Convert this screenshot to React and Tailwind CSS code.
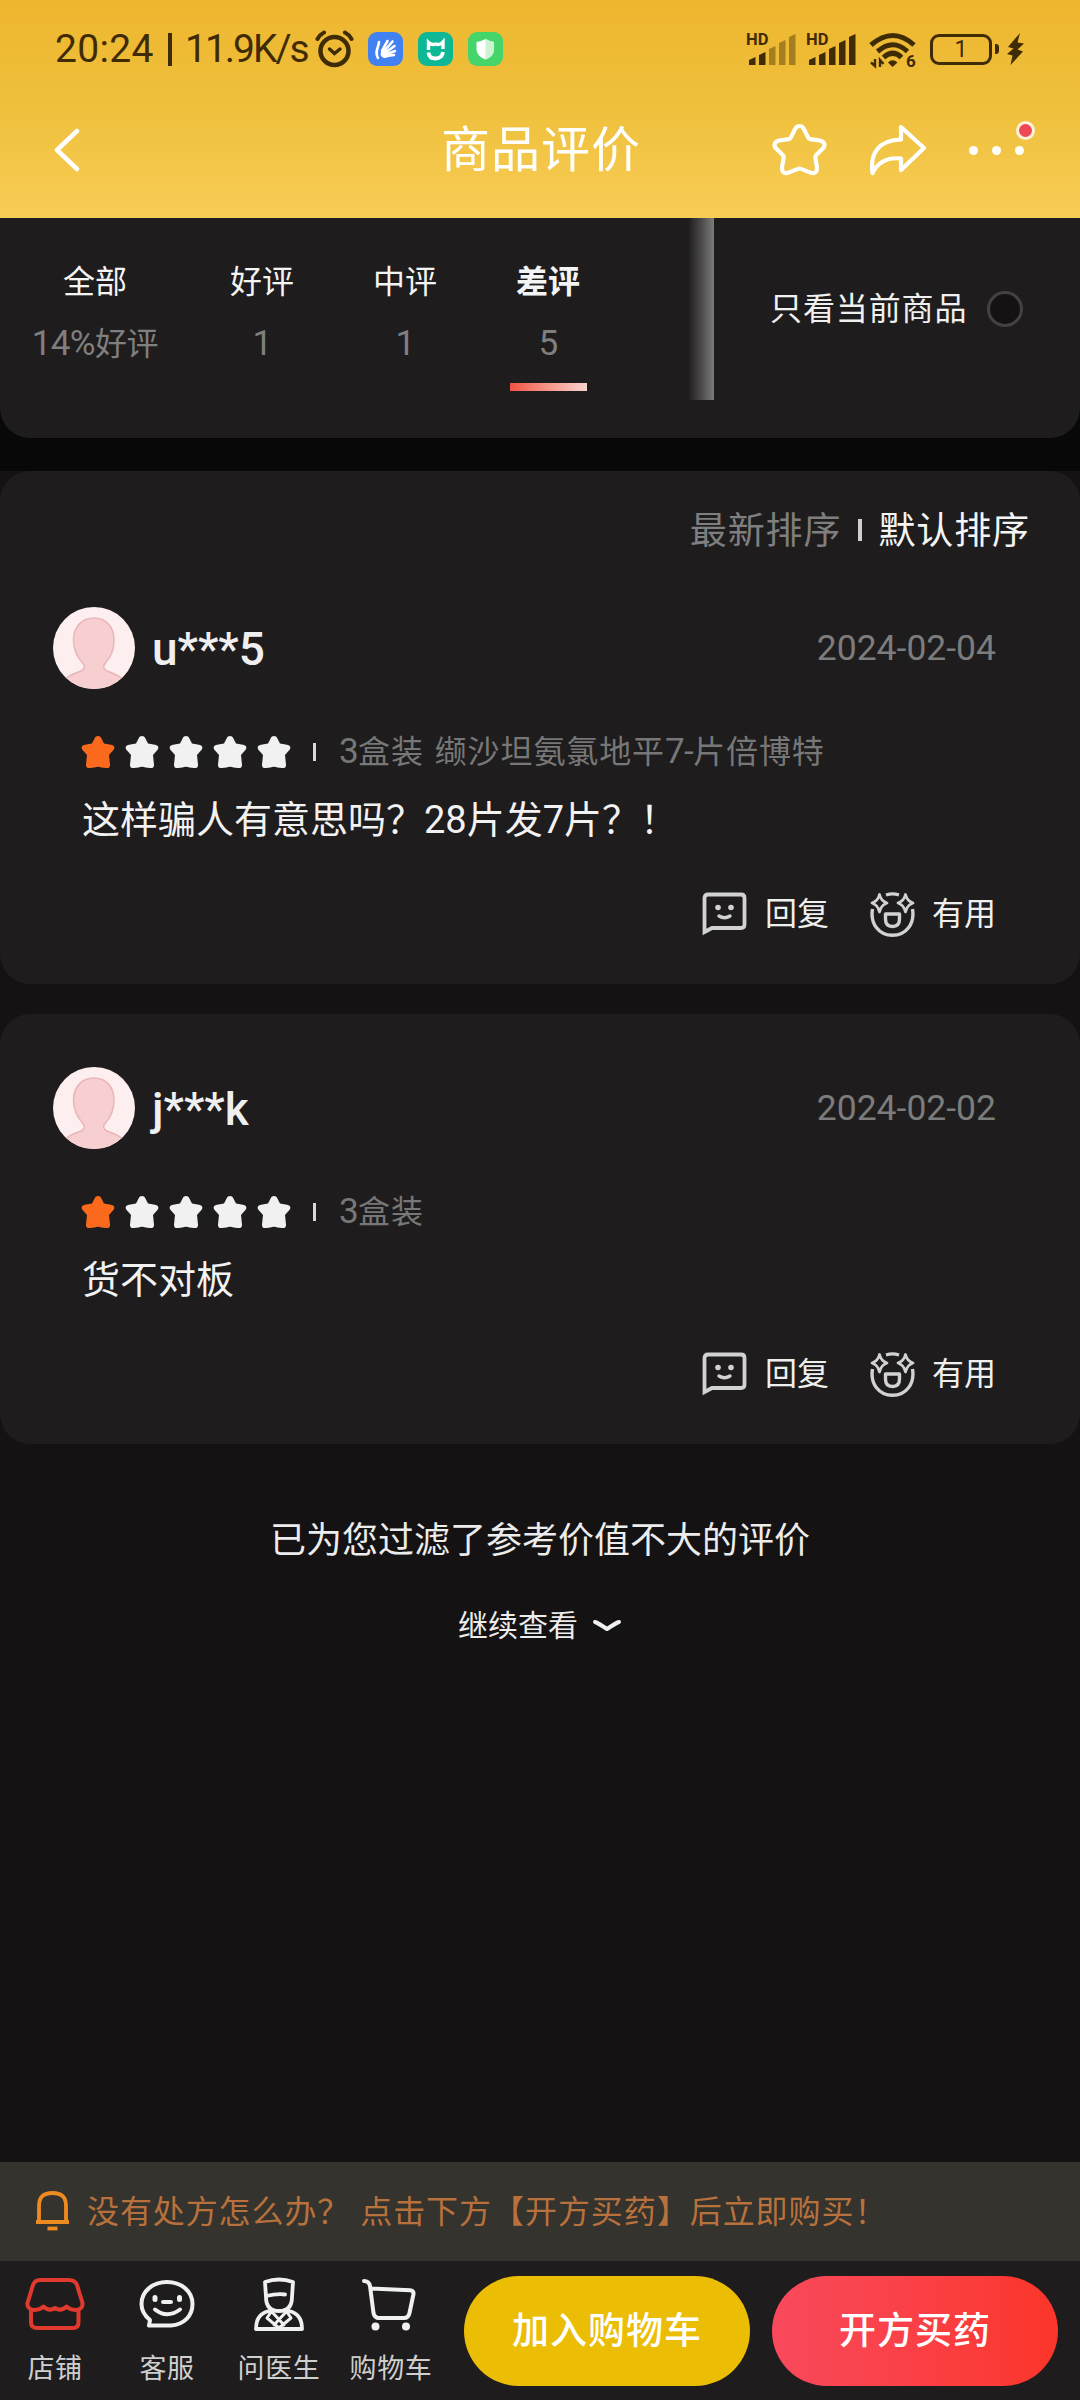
const STAR =
  "M27.5 3 C29.6 3 31 4.2 32 6.2 L36 14.4 C36.5 15.4 37.2 15.9 38.3 16.1 L47.6 17.5 C52.4 18.3 54 22.3 50.8 25.6 L44.3 32 C43.5 32.8 43.2 33.7 43.4 34.8 L44.9 43.8 C45.6 49 42.4 51.6 37.9 49.4 L29.6 46.1 C28.2 45.5 26.8 45.5 25.4 46.1 L17.1 49.4 C12.6 51.6 9.4 49 10.1 43.8 L11.6 34.8 C11.8 33.7 11.5 32.8 10.7 32 L4.2 25.6 C1 22.3 2.6 18.3 7.4 17.5 L16.7 16.1 C17.8 15.9 18.5 15.4 19 14.4 L23 6.2 C24 4.2 25.4 3 27.5 3 Z";

const RATING_STAR =
  "M17 1 C18.6 1 19.6 1.8 20.3 3.2 L23 8.6 L30 9.8 C33.4 10.4 34.4 12.8 32.2 15.2 L28 20 L29 29.5 C29.2 32.4 27.8 33.4 25 33 L20.5 32.6 Q17 30.8 13.500 32.6 L9 33 C6.2 33.400 4.800 32.400 5 29.500 L6 20 L1.800 15.200 C-0.400 12.800 0.600 10.400 4 9.800 L11 8.600 L13.700 3.200 C14.400 1.800 15.400 1 17 1 Z";

// Digits are set slightly larger than the Han characters around them.
function Mixed({ children }) {
  return children.split(/([\d%-]+)/).map((part, i) =>
    i % 2 ? (
      <span key={i} className="text-[1.1em] leading-none tracking-[-0.02em]">{part}</span>
    ) : (
      part
    )
  );
}

function Signal({ weak }) {
  const heights = [8, 13, 19, 25, 31];
  return (
    <svg width="50" height="34" viewBox="0 0 50 34" fill="#3f2c05" className="overflow-visible">
      <text x="-1" y="13" fontFamily="Roboto" fontWeight="700" fontSize="16.5">HD</text>
      {heights.map((h, i) => (
        <path
          key={h}
          d={`M${2 + i * 10} ${33 - h + 3} L${8.5 + i * 10} ${33 - h} V33 H${2 + i * 10} Z`}
          opacity={weak && i > 1 ? 0.42 : 1}
        />
      ))}
    </svg>
  );
}

function StatusBar() {
  return (
    <div className="flex h-[98px] items-center pl-[55px] text-[#3f2c05]">
      <div className="w-[98px] whitespace-nowrap text-[39px] leading-[46px] tracking-[0.3px]">20:24</div>
      <div className="ml-[15px] h-[33px] w-[4px] bg-[#3f2c05]" />
      <div className="ml-[13px] w-[124px] whitespace-nowrap text-[39px] leading-[46px] tracking-[-2px]">11.9K/s</div>
      <svg className="ml-[6px]" width="39" height="38" viewBox="0 0 39 38" fill="none" stroke="#3f2c05" strokeLinecap="round">
        <circle cx="19.500" cy="21" r="14" strokeWidth="4.500" />
        <path d="M2.500 9 Q5 4.500 9 2.500 M36.500 9 Q34 4.500 30 2.500" strokeWidth="4" />
        <path d="M14.500 19 L19.500 23.500 L25 19" strokeWidth="3.500" />
      </svg>
      <svg className="ml-[14px]" width="35" height="34" viewBox="0 0 35 34">
        <rect width="35" height="34" rx="9" fill="#4281f2" />
        <g stroke="#fff" strokeWidth="2.600" strokeLinecap="round" fill="none">
          <path d="M10 26 C6.500 20 10 17 11 10" />
          <path d="M14 19 L19.500 9 M15.500 20 L24.500 9.500 M17 21 L26.500 14 M18 22.500 L27 19 M18.500 24 L26 23" />
        </g>
        <path d="M14 17 L20 19 L20 25 C17 27 13 26 12.500 22 Z" fill="#fff" />
      </svg>
      <svg className="ml-[15px]" width="35" height="34" viewBox="0 0 35 34" fill="none" stroke="#fff">
        <rect width="35" height="34" rx="9" fill="#0eb795" stroke="none" />
        <path d="M10.500 18 V10.500 Q13.500 13.500 17.500 12 Q22 13.500 25 10 V17" strokeWidth="3.400" />
        <path d="M10.500 20.500 Q11 26.500 17.500 26.500 Q24 26.500 25 20" strokeWidth="3.800" />
      </svg>
      <svg className="ml-[15px]" width="35" height="34" viewBox="0 0 35 34">
        <rect width="35" height="34" rx="9" fill="#45d56b" />
        <path d="M17.500 7 Q22 9.500 26 10 V18 Q25.500 24.500 17.500 27.500 Q9.500 24.500 8.500 18 V10 Q13 9.500 17.500 7Z" fill="#fff" />
        <path d="M17.500 7 Q22 9.500 26 10 V18 Q25.500 24.500 17.500 27.500Z" fill="#cdf3d3" />
      </svg>
      <div className="ml-[244px] flex items-center gap-[10px]">
        <Signal weak />
        <Signal />
      </div>
      <svg className="ml-[12px] mt-[3px] overflow-visible" width="48" height="36" viewBox="0 0 48 36" fill="none" stroke="#3f2c05">
        <path d="M2 12 Q24 -7 45 12" strokeWidth="5" />
        <path d="M8.500 18.500 Q24 5 38.500 18.500" strokeWidth="5" />
        <path d="M14.500 24.500 Q24 16 32.500 24.500" strokeWidth="5" />
        <path d="M19 29.500 Q23.500 25 28.500 29.500 L23.500 34Z" fill="#3f2c05" stroke="none" />
        <path d="M6 26 V33 L2 29.500 M11 34 V27 L14.500 31" strokeWidth="2.400" />
        <text x="37" y="34" fontFamily="Roboto" fontWeight="700" fontSize="17" fill="#3f2c05" stroke="none">6</text>
      </svg>
      <div className="ml-[13px] flex h-[31px] w-[62px] items-center justify-center rounded-[9px] border-[3px] border-[#3f2c05] pt-[2px] text-[23px] leading-[24px]">1</div>
      <div className="ml-[3px] h-[10px] w-[4px] rounded-r-[3px] bg-[#3f2c05]" />
      <svg className="ml-[8px]" width="17" height="32" viewBox="0 0 17 32" fill="#3f2c05">
        <path d="M13 0 L1 14 L6.500 15.500 L0 21 L5.500 22.500 L3.500 32 L16 18.500 L10.500 16.500 L17 10.500 L10.500 9.500 Z" />
      </svg>
    </div>
  );
}

function TitleBar() {
  return (
    <div className="flex h-[104px] items-center pl-[54px]">
      <svg width="26" height="44" viewBox="0 0 26 44" fill="none" stroke="#fff" strokeWidth="4.500" strokeLinecap="round" strokeLinejoin="round">
        <path d="M23 3 L3 22 L23 41" />
      </svg>
      <h1 className="ml-[361px] mt-[1px] w-[200px] whitespace-nowrap text-[49px] leading-[60px] tracking-[1px] text-white">商品评价</h1>
      <svg className="mb-[2px] ml-[131px]" width="55" height="53" viewBox="0 0 55 53" fill="none" stroke="#fff" strokeWidth="4.200">
        <path d={STAR} />
      </svg>
      <svg className="mb-[2px] ml-[42px]" width="58" height="53" viewBox="0 0 58 53" fill="none" stroke="#fff" strokeWidth="4.200" strokeLinejoin="round">
        <path d="M32 4 L55 25 L32 47 V35.500 C18 34 9 39 3.500 50 C1 31 9 17 32 16.500 Z" />
      </svg>
      <div className="relative ml-[42px] flex gap-[14px]">
        <span className="size-[9px] rounded-full bg-white" />
        <span className="size-[9px] rounded-full bg-white" />
        <span className="size-[9px] rounded-full bg-white" />
        <span className="absolute -top-[25px] left-[47px] size-[19px] rounded-full border-[3px] border-[#fff0d8] bg-[#ee4856]" />
      </div>
    </div>
  );
}

const TABS = [
  { name: "全部", count: "14%好评", width: "w-[124px]" },
  { name: "好评", count: "1", width: "w-[80px] ml-[65px]" },
  { name: "中评", count: "1", width: "w-[80px] ml-[63px]" },
  { name: "差评", count: "5", width: "w-[80px] ml-[63px]", active: true },
];

function Tabs() {
  return (
    <div className="flex h-[220px] rounded-b-[30px] bg-[#1e1c1d]">
      <div className="flex w-[688px] pl-[33px] pt-[44px]">
        {TABS.map((t) => (
          <div key={t.name} className={"flex flex-col items-center " + t.width}>
            <div className={"whitespace-nowrap text-[32px] leading-[40px] text-[#f4f4f4] " + (t.active ? "font-bold" : "")}>{t.name}</div>
            <div className="mt-[22px] h-[40px] whitespace-nowrap text-[32px] leading-[40px] tracking-[-0.3px] text-[#7f7f7f]"><Mixed>{t.count}</Mixed></div>
            {t.active && <div className="mt-[19px] h-[8px] w-[77px] bg-linear-to-r from-[#ee5143] to-[#f6d3ce]" />}
          </div>
        ))}
      </div>
      <div className="h-[182px] w-[26px] bg-linear-to-r from-[#1e1c1d] to-[#7c7c7a]" />
      <div className="flex h-[181px] items-center pl-[56px]">
        <span className="whitespace-nowrap text-[32px] leading-[40px] tracking-[0.9px] text-[#f0f0f0]">只看当前商品</span>
        <span className="ml-[20px] size-[36px] rounded-full border-[3px] border-[#434142] bg-[#141213]" />
      </div>
    </div>
  );
}

function Avatar() {
  return (
    <svg width="82" height="82" viewBox="0 0 82 82">
      <clipPath id="avatar-clip"><circle cx="41" cy="41" r="41" /></clipPath>
      <g clipPath="url(#avatar-clip)">
        <rect width="82" height="82" fill="#fdeff0" />
        <path
          d="M41 11 C53 11 61 20 61 33 C61 43 57 51 52.500 56 C49.500 59.500 50.500 62 54 64 C62 67 70 70 76 78 V90 H6 V78 C12 70 20 67 28 64 C31.500 62 32.500 59.500 29.500 56 C25 51 20.500 43 20.500 33 C20.500 20 29 11 41 11Z"
          fill="#f7cfd1"
          stroke="#e9b5b8"
          strokeWidth="1.500"
        />
      </g>
    </svg>
  );
}

function ReplyIcon() {
  return (
    <svg width="45" height="44" viewBox="0 0 45 44" fill="none" stroke="#d2d2d2" strokeWidth="3.800">
      <path d="M2.500 40 V6 Q2.500 2.500 6 2.500 H39 Q42.500 2.500 42.500 6 V32.500 Q42.500 36 39 36 H10 Z" />
      <circle cx="16" cy="15.500" r="2.800" fill="#d2d2d2" stroke="none" />
      <circle cx="29" cy="15.500" r="2.800" fill="#d2d2d2" stroke="none" />
      <path d="M17 24 Q22.500 27.500 28 24" strokeWidth="3.400" strokeLinecap="round" />
    </svg>
  );
}

function UsefulIcon() {
  return (
    <svg width="45" height="45" viewBox="0 0 45 45" fill="none" stroke="#d2d2d2" strokeWidth="3.400" strokeLinejoin="round">
      <path d="M16 3 Q22.500 0.800 29 3" />
      <path d="M2.500 17 C0 32 9 43.300 22.500 43.300 C36 43.300 45 32 42.500 17" />
      <path d="M9.500 2.500 Q11 9 17 11 Q11 13 9.500 20 Q8 13 2 11 Q8 9 9.500 2.500Z" strokeWidth="2.800" />
      <path d="M35.500 2.500 Q37 9 43 11 Q37 13 35.500 20 Q34 13 28 11 Q34 9 35.500 2.500Z" strokeWidth="2.800" />
      <path d="M15.500 22 H29.500 V27 Q29.500 34.500 22.500 34.500 Q15.500 34.500 15.500 27Z" />
    </svg>
  );
}

function Review({ name, date, spec, text }) {
  return (
    <article>
      <div className="flex h-[82px] items-center pl-[53px] pr-[84px]">
        <Avatar />
        <span className="ml-[17px] mt-[2px] text-[46px] font-medium leading-[54px] text-[#efefef]">{name}</span>
        <time className="ml-auto text-[35.5px] leading-[40px] text-[#7c7c7c]">{date}</time>
      </div>
      <div className="mt-[43px] flex h-[40px] items-center pl-[81px]">
        <div className="flex gap-[10px]">
          {[0, 1, 2, 3, 4].map((i) => (
            <svg key={i} width="34" height="34" viewBox="0 0 34 34" fill={i === 0 ? "#fb6a1c" : "#f1f1f1"}>
              <path d={RATING_STAR} />
            </svg>
          ))}
        </div>
        <div className="ml-[22px] h-[18px] w-[3px] bg-[#d8d8d8]" />
        <span className="ml-[23px] h-[40px] whitespace-nowrap text-[32px] leading-[40px] tracking-[0.9px] text-[#777777] [word-spacing:2px]"><Mixed>{spec}</Mixed></span>
      </div>
      <p className="ml-[82px] mt-[23px] h-[50px] whitespace-nowrap text-[38px] leading-[50px] text-[#f2f2f2]">{text}</p>
      <div className="mt-[46px] flex h-[46px] items-center pl-[702px] text-[32px] leading-[40px] text-[#efefef]">
        <ReplyIcon />
        <span className="ml-[18px] whitespace-nowrap">回复</span>
        <span className="ml-[41px]"><UsefulIcon /></span>
        <span className="ml-[17px] whitespace-nowrap">有用</span>
      </div>
    </article>
  );
}

const iconProps = { width: 60, height: 56, viewBox: "0 0 60 56", fill: "none", stroke: "#f0f0f0", strokeWidth: 4, strokeLinecap: "round", strokeLinejoin: "round" };

const NAV = [
  {
    label: "店铺",
    icon: (
      <svg {...iconProps} stroke="#e0392e">
        <path d="M15 4 H44 Q50 4 52 9 L57.500 27 Q58 33 51.500 34 Q45 34 41.500 30.500 Q36 36 30 32 Q24 36 18.500 30.500 Q15 34 8.500 34 Q2 33 2.500 27 L8 9 Q10 4 15 4Z" />
        <path d="M6 34 V46 Q6 52 12 52 H48 Q53.500 52 53.500 46 V34" />
      </svg>
    ),
  },
  {
    label: "客服",
    icon: (
      <svg {...iconProps}>
        <path d="M12 49.500 H34 C47 48.500 55.500 40 55.500 28 C55.500 15 44 6 30 6 C16 6 4.500 15 4.500 28 C4.500 35 8 40 13 44 Z" />
        <path d="M18 21.500 V23.500 M42.500 21.500 V23.500" strokeWidth="5" />
        <path d="M26 26 H34" />
        <path d="M18 33.500 Q30 43 43 33.500" />
      </svg>
    ),
  },
  {
    label: "问医生",
    icon: (
      <svg {...iconProps} strokeWidth={3.8}>
        <path d="M16 6 Q30 1 44 6 L43 21 Q43 35 30 35 Q17 35 17 21 Z M17 20 Q28 17.500 36 18.500" />
        <path d="M20 35 C11 37 7 43 7 53 H53 C53 43 49 37 40 35" />
        <path d="M22 36 L18 42 L30 52 L42 42 L38 36 M24 37 L35 49 M36 37 L25 49" strokeWidth="3" />
      </svg>
    ),
  },
  {
    label: "购物车",
    icon: (
      <svg {...iconProps} strokeWidth={4}>
        <path d="M3 5 Q8 5 9 10 L12.500 37 Q13.500 42 18 42 H43 Q47.500 42 48.500 37 L52.500 18 Q53 14.500 49 14.300 L10 12.500" />
        <circle cx="14.500" cy="50.500" r="4" fill="#f0f0f0" stroke="none" />
        <circle cx="45" cy="50.500" r="4" fill="#f0f0f0" stroke="none" />
      </svg>
    ),
  },
];

function BottomBar() {
  return (
    <footer className="flex h-[139px] bg-[#1e1c1d]">
      <nav className="-ml-px flex w-[465px] pt-[15px]">
        {NAV.map((n) => (
          <div key={n.label} className="flex w-[112px] flex-col items-center">
            {n.icon}
            <span className="mt-[19px] whitespace-nowrap text-[27px] leading-[36px] tracking-[0.6px] text-[#cfcfcf]">{n.label}</span>
          </div>
        ))}
      </nav>
      <div className="flex gap-[22px] pt-[15px] text-[37px] font-medium leading-[46px] tracking-[1px] text-white">
        <button className="flex h-[110px] w-[286px] items-center justify-center rounded-full bg-[#ebbd05] pt-[2px]">加入购物车</button>
        <button className="flex h-[110px] w-[286px] items-center justify-center rounded-full bg-linear-to-r from-[#f9495c] to-[#fb3528] pt-[2px]">开方买药</button>
      </div>
    </footer>
  );
}

export default function App() {
  return (
    <div className="flex h-[2400px] w-[1080px] flex-col overflow-hidden bg-[#141213] font-[Roboto,'Noto_Sans_CJK_SC',sans-serif]">
      <header className="h-[218px] shrink-0 bg-linear-to-b from-[#eeb62f] via-[#efc03c] to-[#f8cd55]">
        <StatusBar />
        <TitleBar />
      </header>
      <div className="bg-[#080808] pb-[33px]">
        <Tabs />
      </div>
      <main className="flex grow flex-col">
        <section className="h-[513px] rounded-[30px] bg-[#1e1c1d]">
          <div className="flex h-[136px] items-center justify-end pb-[15px] pr-[50px] text-[37px] leading-[46px] tracking-[0.9px]">
            <span className="whitespace-nowrap text-[#7f7f7f]">最新排序</span>
            <span className="mb-[3px] ml-[17px] h-[22px] w-[4px] bg-[#d0d0d0]" />
            <span className="ml-[16px] whitespace-nowrap text-[#f4f4f4]">默认排序</span>
          </div>
          <Review name="u***5" date="2024-02-04" spec="3盒装 缬沙坦氨氯地平7-片倍博特" text="这样骗人有意思吗？28片发7片？！" />
        </section>
        <section className="mt-[30px] h-[430px] rounded-[30px] bg-[#1e1c1d] pt-[53px]">
          <Review name="j***k" date="2024-02-02" spec="3盒装" text="货不对板" />
        </section>
        <div className="mt-[72px] flex flex-col items-center">
          <p className="whitespace-nowrap text-[36px] leading-[50px] text-[#ececec]">已为您过滤了参考价值不大的评价</p>
          <button className="mt-[40px] flex items-center text-[30px] leading-[40px] text-[#ececec]">
            继续查看
            <svg className="ml-[14px]" width="30" height="14" viewBox="0 0 30 14" fill="none" stroke="#f0f0f0" strokeWidth="4" strokeLinecap="round" strokeLinejoin="round">
              <path d="M3 3 Q6 4 15 10 Q24 4 27 3" />
            </svg>
          </button>
        </div>
      </main>
      <aside className="flex h-[99px] shrink-0 items-center bg-[#34332e] pl-[35px] text-[#b8713c]">
        <svg width="35" height="42" viewBox="0 0 35 42" fill="none" stroke="#ee8b20" strokeWidth="3.800" className="mb-[1px]">
          <path d="M4 32 V16 Q4 3 17.500 3 Q31 3 31 16 V32 M1 32 H34" />
          <path d="M12.500 38.500 H22.500" />
        </svg>
        <span className="ml-[17px] whitespace-nowrap text-[32px] leading-[42px] tracking-[0.9px]">没有处方怎么办？</span>
        <span className="ml-[10px] whitespace-nowrap text-[32px] leading-[42px] tracking-[0.95px]">点击下方【开方买药】后立即购买！</span>
      </aside>
      <BottomBar />
    </div>
  );
}
